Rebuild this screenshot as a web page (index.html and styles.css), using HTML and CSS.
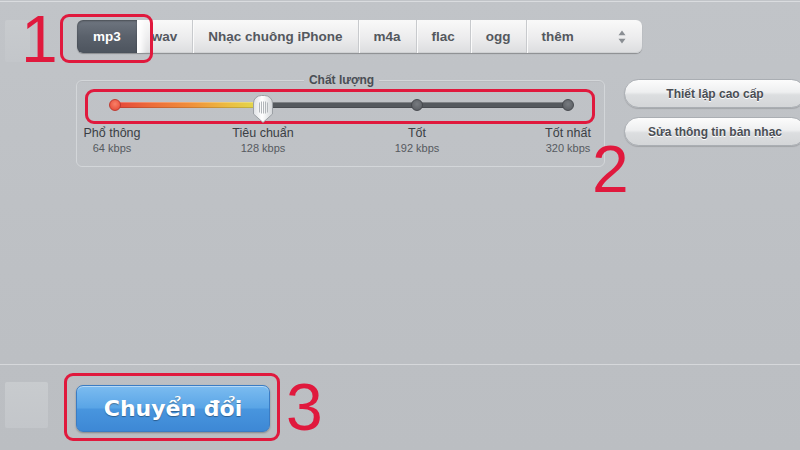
FILE: index.html
```html
<!DOCTYPE html>
<html lang="vi">
<head>
<meta charset="utf-8">
<title>Chuyển đổi</title>
<link rel="stylesheet" href="styles.css">
</head>
<body>
<div class="app">
  <div class="topline"></div>

  <div class="formats">
    <div class="sq sq-top"></div>
    <div class="tabs">
      <div class="tab active">mp3</div>
      <div class="tab">wav</div>
      <div class="tab">Nhạc chuông iPhone</div>
      <div class="tab">m4a</div>
      <div class="tab">flac</div>
      <div class="tab">ogg</div>
      <div class="tab more">thêm
        <svg class="updown" width="8" height="14" viewBox="0 0 8 14"><path d="M4 0.5 L7.5 5.2 H0.5Z M4 13.5 L7.5 8.8 H0.5Z" fill="#8a8e93"/></svg>
      </div>
    </div>
  </div>

  <div class="quality-row">
    <div class="panel">
      <div class="legend">Chất lượng</div>
      <div class="stops">
        <div class="stop">
          <div class="mark"><span class="dot red"></span></div>
          <div class="label">Phổ thông</div>
          <div class="kbps">64 kbps</div>
        </div>
        <div class="stop">
          <div class="mark">
            <svg class="knob" width="20" height="28" viewBox="0 0 20 28">
              <defs><linearGradient id="kg" x1="0" x2="1" y1="0" y2="0"><stop offset="0" stop-color="#dfe1e4"/><stop offset=".45" stop-color="#ffffff"/><stop offset="1" stop-color="#d3d6d9"/></linearGradient></defs>
              <path d="M0.5 8 A8 7.5 0 0 1 8.5 0.5 H11.5 A8 7.5 0 0 1 19.5 8 V19 L10 27.5 L0.5 19 Z" fill="url(#kg)" stroke="#9ca0a5"/>
              <path d="M6.5 7.5v10M8.5 6.5v12M10.5 6.5v12M12.5 6.5v12M14.5 7.5v10" stroke="#b2b6ba" stroke-width="1"/>
            </svg>
          </div>
          <div class="label">Tiêu chuẩn</div>
          <div class="kbps">128 kbps</div>
        </div>
        <div class="stop">
          <div class="mark"><span class="dot gray"></span></div>
          <div class="label">Tốt</div>
          <div class="kbps">192 kbps</div>
        </div>
        <div class="stop">
          <div class="mark"><span class="dot gray"></span></div>
          <div class="label">Tốt nhất</div>
          <div class="kbps">320 kbps</div>
        </div>
      </div>
    </div>
    <div class="side">
      <div class="pill">Thiết lập cao cấp</div>
      <div class="pill">Sửa thông tin bản nhạc</div>
    </div>
  </div>

  <div class="footer">
    <div class="sq sq-bottom"></div>
    <div class="convert">Chuyển đổi</div>
  </div>

  <div class="ann-box ann-1"></div>
  <div class="ann-box ann-2"></div>
  <div class="ann-box ann-3"></div>
  <div class="num num-1">1</div>
  <div class="num num-2">2</div>
  <div class="num num-3">3</div>
</div>
</body>
</html>
```
FILE: styles.css
```css
html, body {
  margin: 0;
  padding: 0;
}
body {
  font-family: "Liberation Sans", Arial, sans-serif;
  background: #bec1c5;
}
.app {
  position: relative;
  width: 800px;
  height: 450px;
  overflow: hidden;
  display: flex;
  flex-direction: column;
  background: linear-gradient(#c1c4c8, #bdc0c4 60%, #bbbec2);
}
.topline {
  height: 1px;
  margin-top: 1px;
  background: #dadcdf;
  flex-shrink: 0;
}

/* format tabs */
.formats {
  display: flex;
  align-items: flex-start;
  margin-top: 18px;
  flex-shrink: 0;
}
.sq {
  background: linear-gradient(#c8cbce, #c3c6ca);
  border-radius: 2px;
  flex-shrink: 0;
}
.sq-top {
  width: 25px;
  height: 42px;
  margin-left: 5px;
}
.tabs {
  display: flex;
  height: 33px;
  margin-left: 47px;
  border-radius: 6px;
  background: linear-gradient(#f9f9f9, #ececed 55%, #dcdddf);
  box-shadow: 0 1px 1px rgba(0, 0, 0, 0.28), inset 0 -1px 0 #cfd1d3;
  flex-shrink: 0;
}
.tab {
  display: flex;
  align-items: center;
  padding: 0 15px;
  font-weight: bold;
  font-size: 13.5px;
  color: #54585e;
  border-left: 1px solid #c8cacd;
  box-shadow: inset 1px 0 0 #fbfbfb;
  white-space: nowrap;
}
.tab.active {
  padding: 0 16px;
  border-left: 0;
  border-radius: 6px 0 0 6px;
  color: #ffffff;
  background: linear-gradient(#6f7680, #5a616b 50%, #4d545e);
  box-shadow: inset 0 1px 2px rgba(0, 0, 0, 0.35);
}
.tab.active + .tab {
  border-left: 0;
  box-shadow: inset 12px 0 6px -6px #ffffff;
}
.tab.more {
  padding-right: 16px;
}
.updown {
  margin-left: 44px;
}

/* quality */
.quality-row {
  display: flex;
  align-items: flex-start;
  margin-top: 18px;
  flex-shrink: 0;
}
.panel {
  box-sizing: border-box;
  width: 529px;
  margin-left: 76px;
  padding: 0 36px 11px 38px;
  border: 1px solid #d3d6d9;
  border-radius: 6px;
  box-shadow: inset 0 1px 0 rgba(0, 0, 0, 0.03);
  flex-shrink: 0;
}
.legend {
  display: table;
  margin: -8px auto 8px;
  padding: 0 5px;
  background: #c0c3c7;
  font-size: 12px;
  line-height: 14px;
  font-weight: bold;
  color: #4a4e54;
}
.stops {
  position: relative;
  display: flex;
  justify-content: space-between;
}
.stops::before {
  content: "";
  position: absolute;
  left: 0;
  right: 0;
  top: 7px;
  height: 6px;
  border-radius: 3px;
  background: linear-gradient(to right, #e4463a 0%, #ec6c3a 8%, #f0913b 17%, #ebbd42 25%, #e2d64c 31%, #e4dc5a 33.3%, #55595e 33.3%, #55595e 100%);
  box-shadow: inset 0 1px 0 rgba(255, 255, 255, 0.25), inset 0 -1px 0 rgba(0, 0, 0, 0.15);
}
.stop {
  position: relative;
  z-index: 1;
  width: 0;
  display: flex;
  flex-direction: column;
  align-items: center;
}
.stop:first-child {
  left: -3px;
}
.stop:nth-child(2) {
  left: -3px;
}
.mark {
  height: 28px;
  display: flex;
  align-items: flex-start;
  justify-content: center;
}
.dot {
  display: block;
  box-sizing: border-box;
  width: 12px;
  height: 12px;
  margin-top: 4px;
  border-radius: 50%;
}
.stop:first-child .dot {
  position: relative;
  left: 3px;
}
.dot.red {
  background: radial-gradient(circle at 50% 40%, #f98068, #e34430);
  border: 1px solid #bf3a30;
}
.dot.gray {
  background: radial-gradient(circle at 50% 40%, #777b80, #56595e);
  border: 1px solid #46494e;
}
.knob {
  display: block;
}
.label {
  margin-top: 3px;
  font-size: 12.5px;
  line-height: 15px;
  color: #3a3e44;
  white-space: nowrap;
}
.kbps {
  margin-top: 1px;
  font-size: 11px;
  line-height: 13px;
  color: #565a60;
  white-space: nowrap;
}

/* side buttons */
.side {
  display: flex;
  flex-direction: column;
  gap: 9px;
  margin-left: 19px;
  margin-top: -1px;
  flex-shrink: 0;
}
.pill {
  box-sizing: border-box;
  width: 182px;
  height: 29px;
  border-radius: 15px;
  border: 1px solid #aaaeb3;
  background: linear-gradient(#fcfcfc, #eeeff0 45%, #dcdee0 55%, #d4d6d8);
  box-shadow: 0 1px 1px rgba(0, 0, 0, 0.15);
  display: flex;
  align-items: center;
  justify-content: center;
  font-weight: bold;
  font-size: 12px;
  color: #4a4e54;
  text-shadow: 0 1px 0 #ffffff;
  white-space: nowrap;
}

/* footer */
.footer {
  margin-top: auto;
  height: 85px;
  border-top: 1px solid #d6d8db;
  display: flex;
  align-items: flex-start;
  flex-shrink: 0;
}
.sq-bottom {
  width: 43px;
  height: 46px;
  margin-left: 5px;
  margin-top: 17px;
}
.convert {
  box-sizing: border-box;
  width: 194px;
  height: 47px;
  margin-left: 28px;
  margin-top: 20px;
  border-radius: 7px;
  border: 1px solid #3a7cc4;
  background: linear-gradient(#7cbcf0, #5aa5e6 48%, #4895de 52%, #3d88d5);
  box-shadow: inset 0 1px 0 rgba(255, 255, 255, 0.45), 0 1px 2px rgba(0, 0, 0, 0.3);
  display: flex;
  align-items: center;
  justify-content: center;
  font-family: "DejaVu Sans", Verdana, sans-serif;
  font-weight: bold;
  font-size: 22px;
  color: #ffffff;
  text-shadow: 0 1px 1px rgba(0, 0, 0, 0.35);
  white-space: nowrap;
}

/* annotations */
.ann-box {
  position: absolute;
  box-sizing: border-box;
  border: 3px solid #e0193d;
  border-radius: 9px;
}
.ann-1 { left: 60px; top: 14px; width: 93px; height: 49px; }
.ann-2 { left: 85px; top: 89px; width: 510px; height: 35px; }
.ann-3 { left: 64px; top: 373px; width: 216px; height: 68px; }
.num {
  position: absolute;
  font-family: "Liberation Sans", Arial, sans-serif;
  font-size: 66px;
  line-height: 66px;
  color: #e0193d;
}
.num-1 { left: 21px; top: 6px; }
.num-2 { left: 592px; top: 136px; }
.num-3 { left: 286px; top: 374px; }
```
